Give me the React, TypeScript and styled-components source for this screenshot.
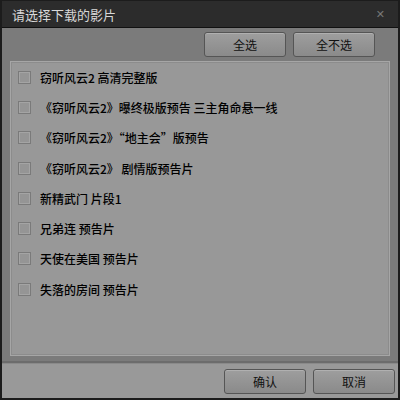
import React, { useState } from 'react';
import styled, { createGlobalStyle } from 'styled-components';

const GlobalStyle = createGlobalStyle`
  html, body {
    margin: 0;
    padding: 0;
    background: #1e1e1e;
  }
  body {
    font-family: "Noto Sans CJK SC", "Liberation Sans", sans-serif;
  }
`;

const films = [
  '窃听风云2 高清完整版',
  '《窃听风云2》曝终极版预告 三主角命悬一线',
  '《窃听风云2》“地主会”版预告',
  '《窃听风云2》 剧情版预告片',
  '新精武门 片段1',
  '兄弟连 预告片',
  '天使在美国 预告片',
  '失落的房间 预告片',
];

export default function App() {
  const [checked, setChecked] = useState<boolean[]>(films.map(() => false));

  const toggle = (i: number) =>
    setChecked((prev) => prev.map((v, j) => (j === i ? !v : v)));

  return (
    <>
      <GlobalStyle />
      <Dialog>
        <TitleBar>
          <Title>请选择下载的影片</Title>
          <Close>✕</Close>
        </TitleBar>
        <Body>
          <Toolbar>
            <Button onClick={() => setChecked(films.map(() => true))}>全选</Button>
            <Button onClick={() => setChecked(films.map(() => false))}>全不选</Button>
          </Toolbar>
          <ListPanel>
            {films.map((name, i) => (
              <Row key={name} onClick={() => toggle(i)}>
                <Box $on={checked[i]} />
                <Label>{name}</Label>
              </Row>
            ))}
          </ListPanel>
        </Body>
        <Footer>
          <Button>确认</Button>
          <Button>取消</Button>
        </Footer>
      </Dialog>
    </>
  );
}

const Dialog = styled.div`
  width: 400px;
  height: 400px;
  box-sizing: border-box;
  border: 2px solid #1c1c1c;
  border-top: 1px solid #1c1c1c;
  display: flex;
  flex-direction: column;
  background: #7a7a7a;
`;

const TitleBar = styled.div`
  height: 26px;
  display: flex;
  align-items: center;
  justify-content: space-between;
  padding: 0 13px 0 10px;
  background: #2c2c2c;
  border-bottom: 1px solid #111;
`;

const Title = styled.span`
  color: #d8d8d8;
  font-size: 13px;
`;

const Close = styled.span`
  color: #777;
  font-size: 11px;
  font-weight: bold;
  font-family: "DejaVu Sans", sans-serif;
`;

const Body = styled.div`
  flex: 1;
  display: flex;
  flex-direction: column;
  padding: 4px 8px 5px 8px;
  background: #7b7b7b;
  border-bottom: 2px solid #6c6c6c;
`;

const Toolbar = styled.div`
  display: flex;
  justify-content: flex-end;
  gap: 7px;
  padding-right: 15px;
  margin-bottom: 4px;
`;

const Button = styled.button`
  width: 82px;
  height: 25px;
  box-sizing: border-box;
  border: 1px solid #555;
  border-radius: 3px;
  background: linear-gradient(#9e9e9e, #8a8a8a);
  box-shadow: inset 0 1px 0 #b0b0b0;
  color: #111;
  font-family: "Noto Sans CJK SC", "Liberation Sans", sans-serif;
  font-size: 12px;
  padding: 0;
  cursor: pointer;
`;

const ListPanel = styled.div`
  flex: 1;
  background: #989898;
  border: 1px solid #a6a6a6;
  box-shadow: inset 0 0 0 1px #8c8c8c;
  padding: 0;
`;

const Row = styled.div`
  height: 30.3px;
  display: flex;
  align-items: center;
  padding-left: 7px;
  cursor: pointer;
`;

const Box = styled.span<{ $on: boolean }>`
  width: 13px;
  height: 13px;
  box-sizing: border-box;
  border: 1px solid #7a7a7a;
  background: ${(p) => (p.$on ? '#606060' : '#959595')};
  box-shadow: inset 0 0 0 1px #a4a4a4;
  margin-right: 9px;
  flex-shrink: 0;
`;

const Label = styled.span`
  color: #000;
  font-size: 12px;
  font-weight: 500;
`;

const Footer = styled.div`
  height: 34px;
  display: flex;
  align-items: center;
  justify-content: flex-end;
  gap: 7px;
  padding-right: 3px;
  background: #999;
  border-top: 1px solid #8a8a8a;
`;
